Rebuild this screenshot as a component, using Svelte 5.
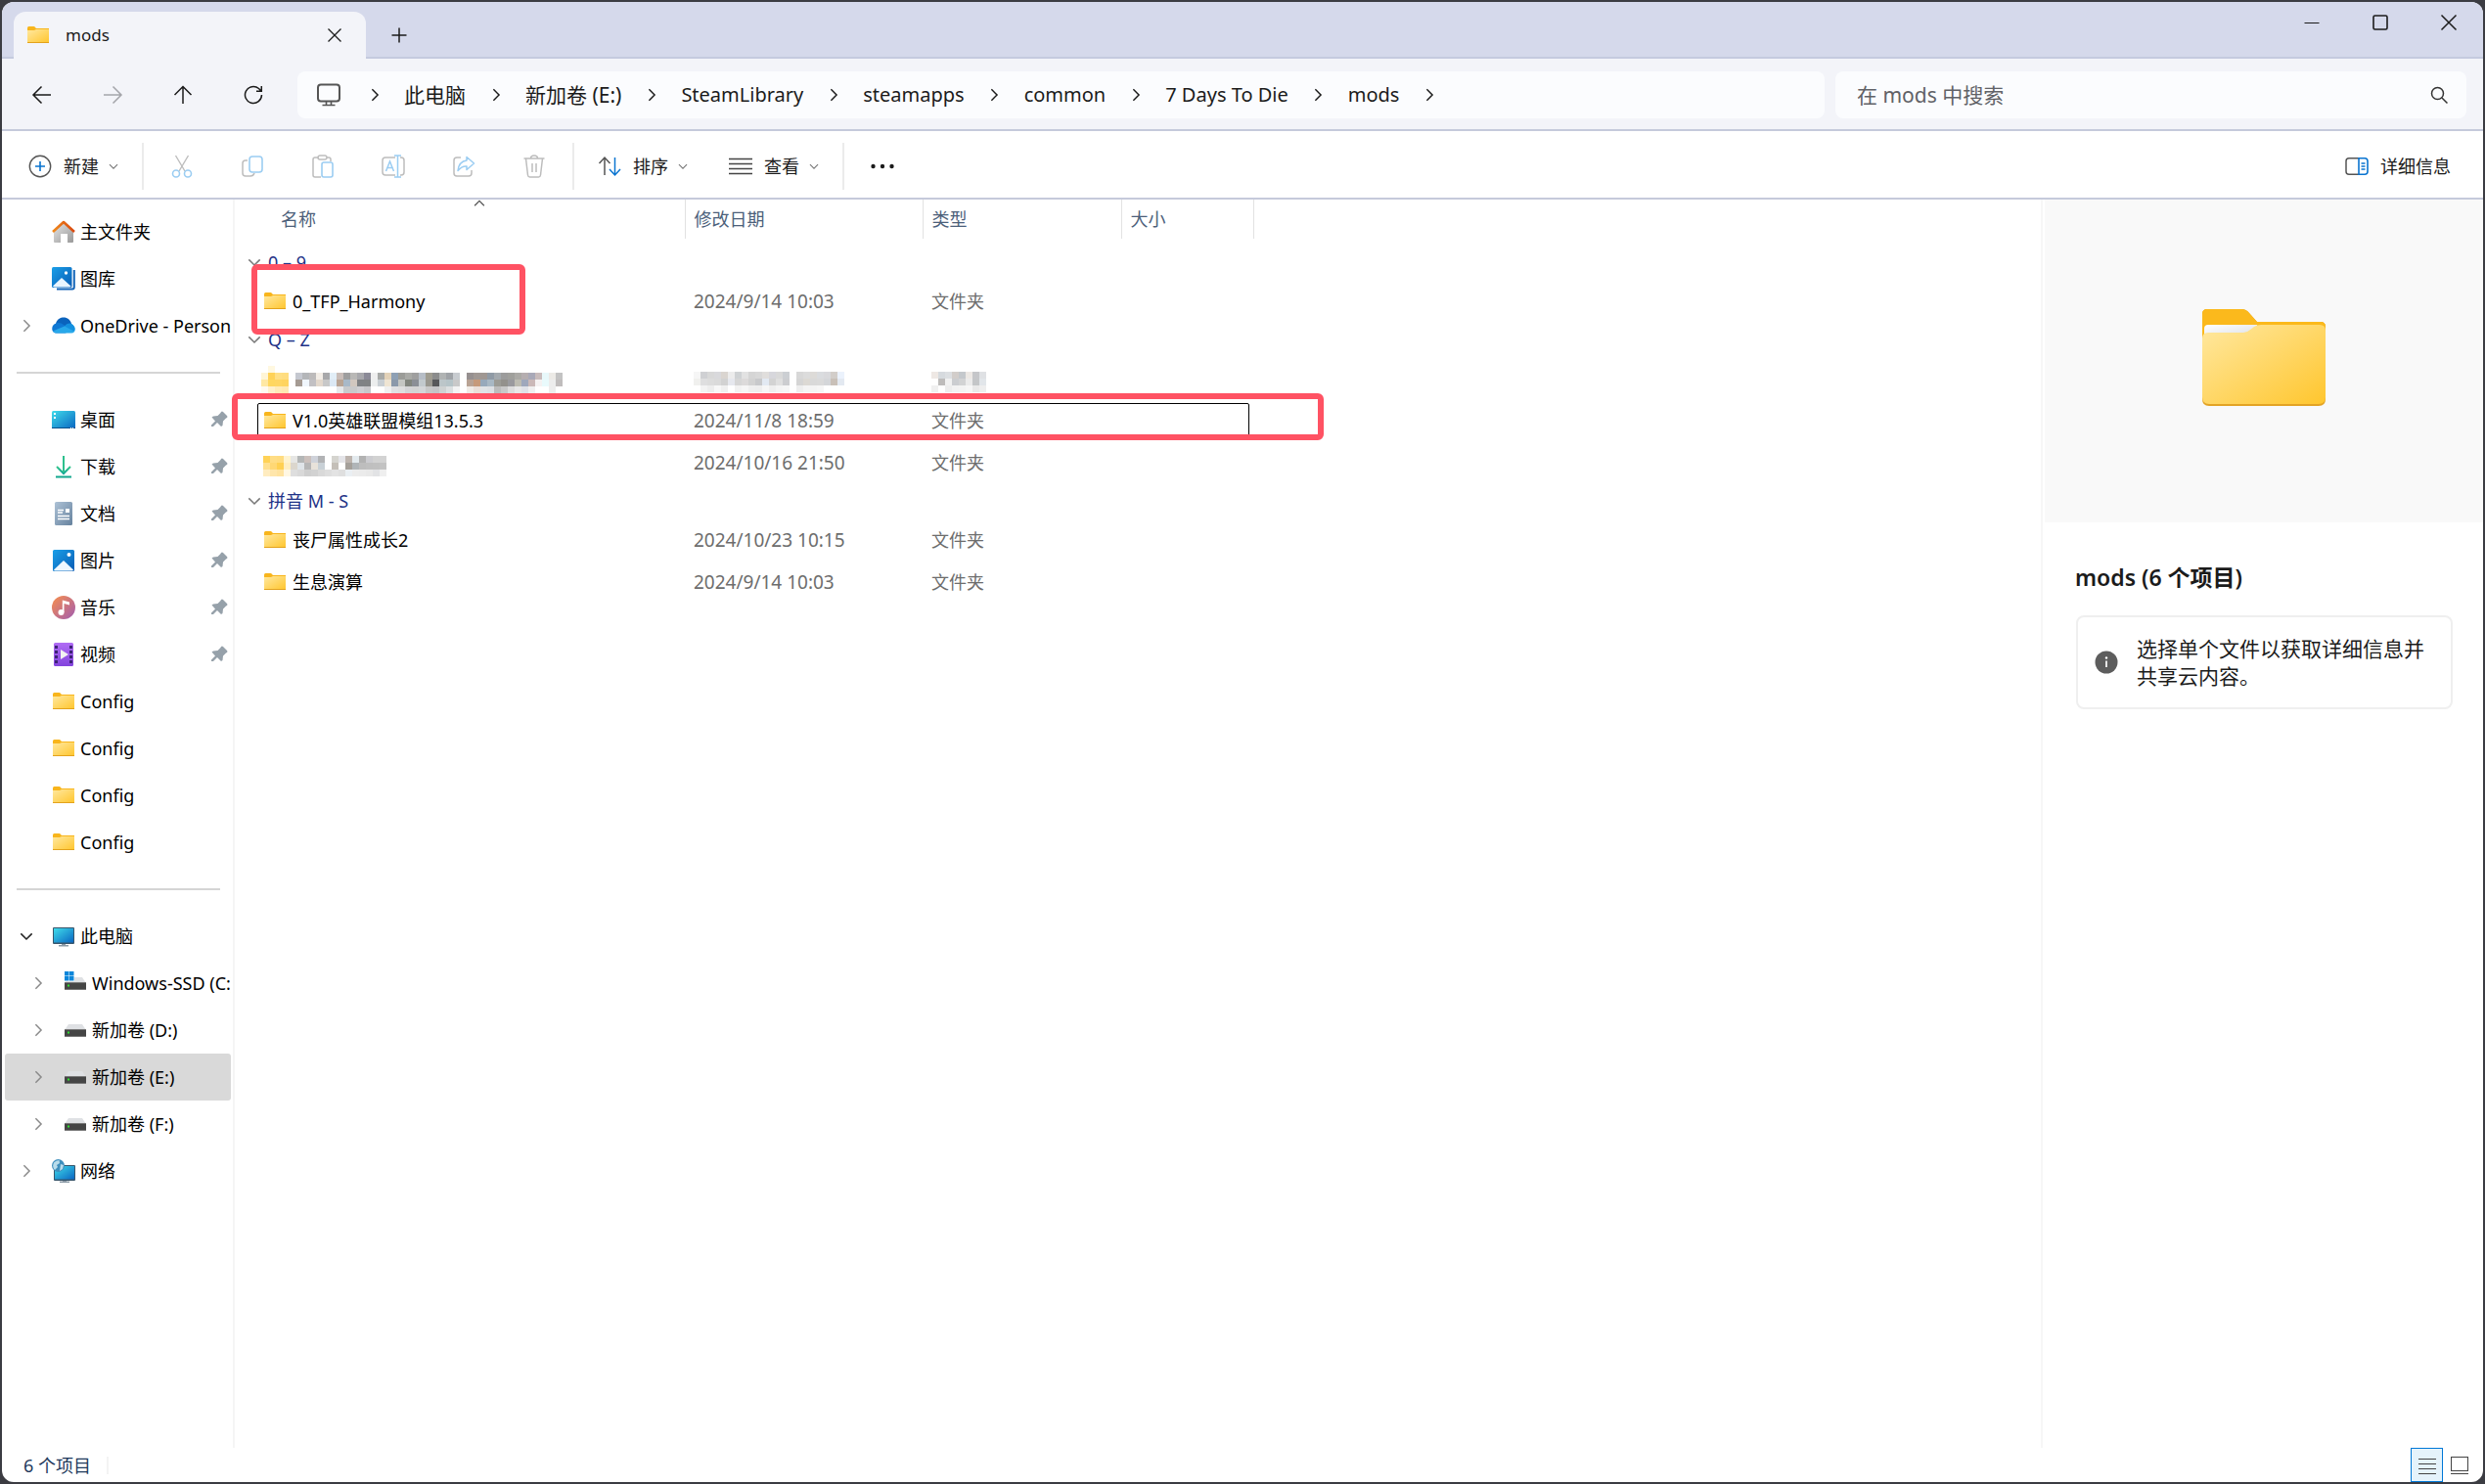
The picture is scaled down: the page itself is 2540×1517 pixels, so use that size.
<script lang="ts">
  const crumbs = ['此电脑', '新加卷 (E:)', 'SteamLibrary', 'steamapps', 'common', '7 Days To Die', 'mods'];

  const tools = [
    { icon: 'cut', label: '剪切' },
    { icon: 'copy', label: '复制' },
    { icon: 'paste', label: '粘贴' },
    { icon: 'rename', label: '重命名' },
    { icon: 'share', label: '共享' },
    { icon: 'delete', label: '删除' },
  ];

  type NavItem = { icon: string; label: string; arrow?: string; pin?: boolean; nested?: boolean; active?: boolean };
  const sections: NavItem[][] = [
    [
      { icon: 'home', label: '主文件夹' },
      { icon: 'gallery', label: '图库' },
      { icon: 'cloud', label: 'OneDrive - Personal', arrow: 'right' },
    ],
    [
      { icon: 'desktop', label: '桌面', pin: true },
      { icon: 'download', label: '下载', pin: true },
      { icon: 'document', label: '文档', pin: true },
      { icon: 'picture', label: '图片', pin: true },
      { icon: 'music', label: '音乐', pin: true },
      { icon: 'video', label: '视频', pin: true },
      { icon: 'folder', label: 'Config' },
      { icon: 'folder', label: 'Config' },
      { icon: 'folder', label: 'Config' },
      { icon: 'folder', label: 'Config' },
    ],
    [
      { icon: 'pc', label: '此电脑', arrow: 'down' },
      { icon: 'windrive', label: 'Windows-SSD (C:)', arrow: 'right', nested: true },
      { icon: 'drive', label: '新加卷 (D:)', arrow: 'right', nested: true },
      { icon: 'drive', label: '新加卷 (E:)', arrow: 'right', nested: true, active: true },
      { icon: 'drive', label: '新加卷 (F:)', arrow: 'right', nested: true },
      { icon: 'network', label: '网络', arrow: 'right' },
    ],
  ];

  const nameTiles = [
    'fff fff8e0 fff fff fff',
    'fff5d6 ffd257 ffdf85 ffdd80 fff c5c8d0 b4b6b9 bdbbbb f3ede6 a8a8aa e2eef7 c9bdb8 9e9e9e b9b8b6 a8a8ac 8b8a97 efefef a8aaa8 e3d2b8 8ea0b4 9b9c98 a9aaa6 9f9f9f b6bdc6 9f9c90 8b8c8c b0b3b3 9fa3a7 c8ccd0 fff 969090 a09894 9f9792 8f9aa5 a3a9ae 9c9c9c a0a09c abaaa6 b5aeb0 a9a9b8 c9bcbc e8f8fa eceae6 c3c3c3',
    'ffe8a3 ffd75f ffd663 ffd45f fff a59b93 f0f6fc c2c0c3 e3d8cc c8c8c8 dbe8f4 b9a595 a8b9c8 d1c7bf 808285 808284 eceeee c9cfd4 efe5d3 8b99aa c4c6c2 82867e 8b8f96 c2c9cd 9a9890 57585a bcc6c9 b6c4c8 c9c9c9 fff b9a394 c69a7a 97a9bb a8b8c4 9c9c96 93918c 9a9a9e bdbcb2 9fa8bc cbb9b8 f5f2f2 e9fafc ededed c0bdbd',
    'fffaf0 fff0cb ffebb8 ffe9b2 fff fff fff fff fff fff fff e6e8ea c8cacc c9c9ca cfced2 c7c7ca fff fff f0f0f0 e0e0e2 dedede d4d4d6 d3d3d3 d4d6d8 c8c8c8 c4c4c6 cfd2d2 dcdfe0 f3f3f3 fff f0ebe6 eadfd8 e0e3e6 dde0e4 bcbcbc c8c8c8 ddd e8e8e8 e0e2e8 f0f0f0 fff fff ededed fff',
  ];
  const dateTiles = [
    'f6f6f6 cfd0d3 d8d8d8 d9d9dc dad5d0 ececec cfd2d4 e2e2e2 d5d5d5 d8d8d8 e0dedc d7d7dc d9d9d9 cccfd3 fff d8d8d8 dcdcdc dddbd8 dadcdf d9d9dc d2cdc9 ebf2fc',
    'f0f0ee dededf dcdcdc dadada d2d2d2 e6e8ee d6d6d6 dcdada d2d2d2 c8c9cb e2e9f2 d3d3d3 dfdfdf cccdd0 fff d5d5d5 dcd9d4 d9d9d9 dadada d4d6d9 c9c0b8 e3e9f1',
    'fff f3f3f3 ededed f7f7f7 f0f0f0 fff f2f2f2 f6f6f6 efefef eee f6f6f6 efefef f4f4f4 f6f6f6 fff eee f4f4f4 f4f4f4 f6f6f6 fff fff fff',
  ];
  const typeTiles = [
    'eee8e4 d6dade dcdfe2 d2cdca c4c8cc ece8e4 c5c6c9 dfe1e4',
    'fff bebcbb f1f1f1 cbcdd0 d2d3d4 ebebeb c4c6c8 e2e6ea',
    'f0f0f0 fff ededed f2f2f2 f3f3f3 f6f6f6 e9e9e9 eee',
  ];
  const shortTiles = [
    'ffd257 ffdd85 ffdc80 fff3cf e6e6e4 b4b6b6 cbc0bc cfd2da b2b3b5 fff d5d4cf e4e4e8 bdb4ae e3eaee b2b2b2 ccccd0 d2d2d2 d3d3d3',
    'ffe090 ffd875 ffd052 ffeec0 dbd6cd dfe4e8 b6b6b6 e8e2da c8d0d6 fff c4bfb8 fff a5a09a b0b5b8 bdbdbd bfbfbf c0c0c0 c3c3c3',
    'ffecc0 ffe6ab ffe3a0 fff7e3 dedede d9d9d9 cfcfcf d2d2d2 d9d9d9 dedede e3e3e3 dfdfdf eaeff3 ececec ebebeb e9e9e9 e2e3e5 efefef',
  ];

  type FileRow = { name?: string; date?: string; hidden?: string; typed?: boolean };
  const groups: { title: string; rows: FileRow[] }[] = [
    { title: '0 – 9', rows: [{ name: '0_TFP_Harmony', date: '2024/9/14 10:03', typed: true }] },
    {
      title: 'Q – Z',
      rows: [
        { hidden: 'long' },
        { name: 'V1.0英雄联盟模组13.5.3', date: '2024/11/8 18:59', typed: true },
        { hidden: 'short', date: '2024/10/16 21:50', typed: true },
      ],
    },
    {
      title: '拼音 M - S',
      rows: [
        { name: '丧尸属性成长2', date: '2024/10/23 10:15', typed: true },
        { name: '生息演算', date: '2024/9/14 10:03', typed: true },
      ],
    },
  ];
</script>

{#snippet mosaic(rows: string[])}
  {@const cols = Math.max(...rows.map((r) => r.split(' ').length))}
  <svg class="mosaic" width={cols * 7} height={rows.length * 7} shape-rendering="crispEdges" aria-hidden="true">
    {#each rows as row, y}
      {#each row.split(' ') as c, x}
        <rect x={x * 7} y={y * 7} width="7" height="7" fill={'#' + c} />
      {/each}
    {/each}
  </svg>
{/snippet}

{#snippet chevron(dir: string, size: number)}
  <svg width={size} height={size} viewBox="0 0 16 16" fill="none" stroke="currentColor" stroke-width="1.7" aria-hidden="true">
    {#if dir === 'right'}<path d="M5 1.5 11.5 8 5 14.5" />
    {:else if dir === 'up'}<path d="M1.5 11 8 4.5 14.5 11" />
    {:else}<path d="M1.5 5 8 11.5 14.5 5" />{/if}
  </svg>
{/snippet}

{#snippet icon(name: string)}
  <svg width="24" height="24" viewBox="0 0 24 24" fill="none" aria-hidden="true">
    {#if name === 'folder'}
      <path d="M1 5V4.5Q1 3 2.500 3H7.500Q8.500 3 9 4L10 5H23V8H1Z" fill="#f8b51c" />
      <path d="M1 7H8L10 6H23V19.500H1Z" fill="url(#gFolder)" />
      <path d="M1 19.500H23" stroke="#e3a21c" />
    {:else if name === 'home'}
      <path d="M2 11 12 3l10 8v11q0 1-1 1h-5v-9H9v9H3q-1 0-1-1Z" fill="url(#gGrey)" />
      <path d="M1 12 12 2l11 10" stroke="url(#gOrange)" stroke-width="2.600" stroke-linejoin="round" />
    {:else if name === 'gallery'}
      <path d="M5 22.500H21Q22.800 22.500 22.800 20.500V3" stroke="#1465b8" stroke-width="2" />
      <rect x="0" y="0" width="20.500" height="21" rx="1.500" fill="url(#gBlue)" />
      <path d="M1 19.500 10 11l9.500 8.500q-.5 1-1.500 1H3q-1.500 0-2-1Z" fill="#eaf5ff" />
      <circle cx="14.500" cy="6" r="1.700" fill="#fff" />
    {:else if name === 'picture'}
      <rect x="1" y="1" width="22" height="22" rx="1.500" fill="url(#gBlue)" />
      <path d="M2 21.500 12 12l10 9.500q-.5 1-1 1H3q-.7 0-1-1Z" fill="#eef7ff" />
      <circle cx="17.500" cy="6" r="2" fill="#fff" />
    {:else if name === 'cloud'}
      <path d="M4 10C5 5 9 3.500 12 3.500c4 0 7 2.500 8 6.500l-8 4Z" fill="#0a63bd" />
      <path d="M5 19.500C-1.500 19.500-1 10.500 4.500 9.500c3-1 5.500 0 7.500 1.500l8 5-6 3.500Z" fill="#0f78d4" />
      <path d="M14 12c2-3 7.500-2.500 8.500.5 2.500 2 1.500 7-2.500 7H5c-2 0-3-.8-4-2Z" fill="#28a8ea" />
      <path d="M13 12.500c3-4 7-3.500 9-1 1.500 1.500 1.500 4.500.5 6Z" fill="#1490df" />
    {:else if name === 'desktop'}
      <rect x="0" y="3" width="24" height="18" rx="1.500" fill="url(#gCyan)" />
      <path d="M0 20.500h24" stroke="#084f8a" />
      <path d="M2 5h2v2H2zM2 9h2v2H2zM19 20h1v1h-1zM21 20h1v1h-1z" fill="#fff" />
    {:else if name === 'download'}
      <path d="M5 12l7 7 7-7" stroke="url(#gGreen)" stroke-width="2" />
      <path d="M12 1v17" stroke="#2dc08d" stroke-width="2" />
      <path d="M4 22.500H20" stroke="#12a88e" stroke-width="2" />
    {:else if name === 'document'}
      <rect x="3" y="0" width="18" height="24" rx="1.500" fill="url(#gDoc)" />
      <path d="M6 8.500h6M6 11h5M6 14.500h12M6 17.500h12" stroke="#fff" stroke-width="1.300" />
      <path d="M14 7h4v4h-4z" fill="#fff" />
    {:else if name === 'music'}
      <circle cx="12" cy="12" r="12" fill="url(#gMusic)" />
      <circle cx="9.500" cy="17" r="3" fill="#fff" />
      <path d="M10.800 17V4.500L18 6.500V9.500L12.500 8V17Z" fill="#fff" />
    {:else if name === 'video'}
      <rect x="2" y="0" width="20" height="24" rx="1.500" fill="url(#gVideo)" />
      <path d="M3 3h3v3H3zM3 8h3v3H3zM3 13h3v3H3zM3 18h3v3H3zM18 3h3v3h-3zM18 8h3v3h-3zM18 13h3v3h-3zM18 18h3v3h-3z" fill="#3e2377" />
      <path d="M9 7v10l8-5Z" fill="#f2f2f2" />
    {:else if name === 'pc'}
      <path d="M10 19h4v2h3v1.500H7V21h3Z" fill="#8b9aa6" />
      <rect x="1" y="3" width="22" height="17" rx="1" fill="#38566c" />
      <rect x="2" y="4" width="20" height="14.500" fill="url(#gCyan)" />
    {:else if name === 'network'}
      <path d="M11 21h4v1.500h3V24H8v-1.500h3Z" fill="#8b9aa6" />
      <rect x="2" y="6" width="22" height="16" rx="1" fill="#38566c" />
      <rect x="3" y="7" width="20" height="13.500" fill="url(#gCyan)" />
      <circle cx="6.500" cy="6.500" r="6.500" fill="#3f8fbd" />
      <path d="M2 3.500Q4 1 7.500 1L8 4 5 6 6 8 3 11Q0 8 2 3.500ZM9 5l3 1-1 4-3 2Z" fill="#b9dceb" />
    {:else if name === 'drive' || name === 'windrive'}
      <path d="M5 6h14l4 6H1Z" fill="#dfe1e4" />
      <rect x="1" y="11" width="22" height="8" fill="#454545" />
      <path d="M1 11.500h22M1 18.500h22" stroke="#777" />
      <path d="M4 13.500h2v2H4z" fill="#2fe22f" />
      {#if name === 'windrive'}
        <path d="M0 0h11v10H0z" fill="#fff" />
        <path d="M1 0h4.500v4.500H1zM6 0h4.500v4.500H6zM1 5h4.500v4.500H1zM6 5h4.500v4.500H6z" fill="#0b86da" />
      {/if}
    {:else if name === 'pin'}
      <path d="M14 4q1-1 2 0l4 4q1 1 0 2l-1 .5-3 3-.5 4.500-1.500 1-4-4-4 4H4v-1.500l4-4-3.500-4L6 8.500l4.500-.5 3-3Z" fill="#96a1aa" />
    {:else if name === 'new'}
      <circle cx="12" cy="12" r="10.700" stroke="#555" stroke-width="1.400" />
      <path d="M12 7v10M7 12h10" stroke="#0a74d0" stroke-width="1.600" />
    {:else if name === 'cut'}
      <path d="M5.500 1 15 17M18.500 1 9 17" stroke="#bdbdbd" stroke-width="1.400" />
      <circle cx="6" cy="19.500" r="3.500" stroke="#9bcdf2" stroke-width="1.600" />
      <circle cx="18" cy="19.500" r="3.500" stroke="#9bcdf2" stroke-width="1.600" />
    {:else if name === 'copy'}
      <path d="M7 6H5Q2 6 2 9v10q0 3 3 3h5q3 0 4-3" stroke="#bdbdbd" stroke-width="1.500" />
      <rect x="9" y="2" width="13" height="16" rx="3" stroke="#9bcdf2" stroke-width="1.600" />
    {:else if name === 'paste'}
      <path d="M8 3H4Q2 3 2 5v16q0 2 2 2h6M16 3h2q2 0 2 2v2" stroke="#bdbdbd" stroke-width="1.500" />
      <rect x="7" y="1" width="9" height="4" rx="2" stroke="#bdbdbd" stroke-width="1.400" />
      <rect x="11" y="8" width="11" height="15" rx="2" stroke="#9bcdf2" stroke-width="1.600" />
    {:else if name === 'rename'}
      <path d="M14 3H4Q1 3 1 6v12q0 3 3 3h10M19 3h1q3 0 3 3v12q0 3-3 3h-1" stroke="#bdbdbd" stroke-width="1.500" />
      <path d="M4.500 17 8.500 7l4 10M6 13.500h5M13 1h7M13 23h7M16.500 1v22" stroke="#9bcdf2" stroke-width="1.500" />
    {:else if name === 'share'}
      <path d="M9 3H5Q2 3 2 6v13q0 3 3 3h12q3 0 3-3v-3" stroke="#bdbdbd" stroke-width="1.500" />
      <path d="M15 2.500 22.500 9 15 15.500V12q-5-.5-9 4.500Q7 7 15 6Z" stroke="#9bcdf2" stroke-width="1.500" stroke-linejoin="round" />
    {:else if name === 'delete'}
      <path d="M1.500 4h21M8.500 4q0-3 3.500-3t3.500 3M3.500 4l2 17q.3 2 2 2h9q1.700 0 2-2l2-17M10 9v9M14 9v9" stroke="#bdbdbd" stroke-width="1.500" />
    {:else if name === 'sort'}
      <path d="M7 21V3M1.500 9 7 3l5.500 6" stroke="#555" stroke-width="1.500" />
      <path d="M17.500 3v18M12 15l5.500 6 5.500-6" stroke="#0a74d0" stroke-width="1.500" />
    {:else if name === 'view'}
      <path d="M0 4.500h24M0 9.500h24M0 14.500h24M0 19.500h24" stroke="#444" stroke-width="1.500" />
    {:else if name === 'more'}
      <circle cx="2.500" cy="12" r="2.200" fill="#1b1b1b" /><circle cx="12" cy="12" r="2.200" fill="#1b1b1b" /><circle cx="21.500" cy="12" r="2.200" fill="#1b1b1b" />
    {:else if name === 'details'}
      <path d="M14 3.700H4Q1 3.700 1 6.700v10.600q0 3 3 3H14" stroke="#555" stroke-width="1.500" />
      <path d="M14 3.700h6q3 0 3 3v10.600q0 3-3 3h-6Z" stroke="#0a74d0" stroke-width="1.600" />
      <path d="M16.500 9h4M16.500 12h4M16.500 15h4" stroke="#0a74d0" stroke-width="1.400" />
    {:else if name === 'back'}
      <path d="M21 12H3.500M11.500 3.500 3 12l8.500 8.500" stroke="currentColor" stroke-width="1.500" />
    {:else if name === 'forward'}
      <path d="M3 12h17.500M12.500 3.500 21 12l-8.500 8.500" stroke="currentColor" stroke-width="1.500" />
    {:else if name === 'up'}
      <path d="M12 21V3.500M3.500 12 12 3.500 20.500 12" stroke="currentColor" stroke-width="1.500" />
    {:else if name === 'refresh'}
      <path d="M20.500 12a8.500 8.500 0 1 1-3-6.500L20 8M20.300 3v5.300H15" stroke="currentColor" stroke-width="1.500" />
    {:else if name === 'monitor'}
      <rect x="1" y="1.500" width="22" height="17" rx="3" stroke="#555" stroke-width="2" />
      <path d="M9.500 19v3M14.500 19v3M5.500 22.500h13" stroke="#555" stroke-width="1.600" />
    {:else if name === 'search'}
      <circle cx="10.500" cy="10.500" r="6" stroke="#333" stroke-width="1.500" />
      <path d="m15 15 5.500 5.500" stroke="#333" stroke-width="1.500" />
    {:else if name === 'close'}
      <path d="m5.500 5.500 13 13m0-13-13 13" stroke="currentColor" stroke-width="1.300" />
    {:else if name === 'plus'}
      <path d="M12 4.500v15M4.500 12h15" stroke="currentColor" stroke-width="1.500" />
    {:else if name === 'min'}
      <path d="M4.500 12.500h15" stroke="currentColor" />
    {:else if name === 'max'}
      <rect x="5" y="5" width="14" height="14" rx="1.500" stroke="currentColor" stroke-width="1.600" />
    {:else if name === 'winclose'}
      <path d="m4.500 4.500 15 15m0-15-15 15" stroke="currentColor" stroke-width="1.500" />
    {:else if name === 'info'}
      <circle cx="12" cy="12" r="11.500" fill="#5d5d5d" />
      <path d="M12 10.500V17" stroke="#fff" stroke-width="1.700" /><circle cx="12" cy="7.500" r="1.200" fill="#fff" />
    {:else if name === 'lines'}
      <path d="M3 5.500h18M3 10.500h18M3 15.500h18M3 20.500h18" stroke="#444" />
    {:else if name === 'thumb'}
      <rect x="3.500" y="3.500" width="17" height="14" stroke="#444" />
      <path d="M3 20.500h18" stroke="#444" />
    {/if}
  </svg>
{/snippet}

<svg class="defs" width="0" height="0" aria-hidden="true">
  <defs>
    <linearGradient id="gFolder" x1="0" y1="0" x2="1" y2="1"><stop stop-color="#ffe8a0" /><stop offset="1" stop-color="#ffc62e" /></linearGradient>
    <linearGradient id="gGrey" x1="0" y1="0" x2="1" y2="1"><stop stop-color="#e4e4e4" /><stop offset="1" stop-color="#999" /></linearGradient>
    <linearGradient id="gOrange" x1="0" y1="0" x2="1" y2="0"><stop stop-color="#f08a1c" /><stop offset="1" stop-color="#d9480f" /></linearGradient>
    <linearGradient id="gBlue" x1="0" y1="0" x2="1" y2="1"><stop stop-color="#1a9fe8" /><stop offset="1" stop-color="#0a5cb4" /></linearGradient>
    <linearGradient id="gCyan" x1="0" y1="0" x2="1" y2="1"><stop stop-color="#3fdcea" /><stop offset="1" stop-color="#0a66c2" /></linearGradient>
    <linearGradient id="gGreen" x1="0" y1="0" x2="0" y2="1"><stop stop-color="#35c68c" /><stop offset="1" stop-color="#10a594" /></linearGradient>
    <linearGradient id="gDoc" x1="0" y1="0" x2="1" y2="1"><stop stop-color="#aec2d6" /><stop offset="1" stop-color="#66829e" /></linearGradient>
    <linearGradient id="gMusic" x1="0" y1="0" x2="1" y2="1"><stop offset="0.1" stop-color="#f08a55" /><stop offset="0.900" stop-color="#a961a8" /></linearGradient>
    <linearGradient id="gVideo" x1="0" y1="0" x2="0" y2="1"><stop stop-color="#b06cf4" /><stop offset="1" stop-color="#8344dd" /></linearGradient>
    <linearGradient id="gPaper" x1="0" y1="0" x2="1" y2="1"><stop stop-color="#fff" /><stop offset="1" stop-color="#dcdfe6" /></linearGradient>
  </defs>
</svg>

<div class="window">
  <header class="titlebar">
    <div class="tab">
      {@render icon('folder')}
      <span class="tab-title">mods</span>
      <button class="tab-close" aria-label="关闭标签页">{@render icon('close')}</button>
    </div>
    <button class="new-tab" aria-label="新建标签页">{@render icon('plus')}</button>
    <div class="caption">
      <button aria-label="最小化">{@render icon('min')}</button>
      <button aria-label="最大化">{@render icon('max')}</button>
      <button aria-label="关闭">{@render icon('winclose')}</button>
    </div>
  </header>

  <div class="navbar">
    <div class="nav-buttons">
      <button aria-label="后退">{@render icon('back')}</button>
      <button aria-label="前进" disabled>{@render icon('forward')}</button>
      <button aria-label="上移">{@render icon('up')}</button>
      <button aria-label="刷新">{@render icon('refresh')}</button>
    </div>
    <nav class="address" aria-label="地址">
      <span class="place">{@render icon('monitor')}</span>
      <span class="sep">{@render chevron('right', 14)}</span>
      {#each crumbs as crumb, i}
        <a href="#crumb-{i}" class:cjk={i < 2}>{crumb}</a>
        <span class="sep">{@render chevron('right', 14)}</span>
      {/each}
    </nav>
    <div class="search">
      <input type="search" aria-label="搜索" placeholder="在 mods 中搜索" />
      {@render icon('search')}
    </div>
  </div>

  <div class="toolbar">
    <button class="cmd">{@render icon('new')}<span>新建</span>{@render chevron('down', 10)}</button>
    <span class="rule"></span>
    {#each tools as t}
      <button class="tool" aria-label={t.label} disabled>{@render icon(t.icon)}</button>
    {/each}
    <span class="rule"></span>
    <button class="cmd sort">{@render icon('sort')}<span>排序</span>{@render chevron('down', 10)}</button>
    <button class="cmd view">{@render icon('view')}<span>查看</span>{@render chevron('down', 10)}</button>
    <span class="rule"></span>
    <button class="tool" aria-label="更多">{@render icon('more')}</button>
    <button class="cmd details-toggle">{@render icon('details')}<span>详细信息</span></button>
  </div>

  <div class="body">
    <nav class="sidebar" aria-label="导航窗格">
      {#each sections as section, s}
        {#if s > 0}<hr />{/if}
        {#each section as item}
          <a class="item" class:nested={item.nested} class:active={item.active} href="#nav">
            <span class="arrow" class:open={item.arrow === 'down'}>
              {#if item.arrow}{@render chevron(item.arrow, 14)}{/if}
            </span>
            {@render icon(item.icon)}
            <span class="label">{item.label}</span>
            {#if item.pin}{@render icon('pin')}{/if}
          </a>
        {/each}
      {/each}
    </nav>

    <main class="files">
      <table>
        <colgroup><col class="c-name" /><col class="c-date" /><col class="c-type" /><col class="c-size" /><col /></colgroup>
        <thead>
          <tr>
            <th scope="col" class="name-head">名称<span class="sorted">{@render chevron('up', 12)}</span></th>
            <th scope="col">修改日期</th><th scope="col">类型</th><th scope="col">大小</th><td></td>
          </tr>
        </thead>
        {#each groups as g}
          <tbody>
            <tr class="group">
              <th scope="rowgroup" colspan="5"><div class="group-head">{@render chevron('down', 14)}<span>{g.title}</span></div></th>
            </tr>
            {#each g.rows as row}
              <tr class="file">
                <td>
                  <div class="name" class:masked={row.hidden === 'long'}>
                    {#if row.hidden === 'long'}{@render mosaic(nameTiles)}
                    {:else if row.hidden}{@render mosaic(shortTiles)}
                    {:else}{@render icon('folder')}<span>{row.name}</span>{/if}
                  </div>
                </td>
                <td class="date">{#if row.date}{row.date}{:else}{@render mosaic(dateTiles)}{/if}</td>
                <td class="type">{#if row.typed}文件夹{:else}{@render mosaic(typeTiles)}{/if}</td>
                <td></td><td></td>
              </tr>
            {/each}
          </tbody>
        {/each}
      </table>
      <div class="focus"></div>
      <div class="mark mark-first"></div>
      <div class="mark mark-second"></div>
    </main>

    <aside class="details" aria-label="详细信息">
      <div class="preview">
        <svg width="126" height="99" viewBox="0 0 126 99" aria-hidden="true">
          <path d="M0 5Q0 0 5 0H40Q45 0 48 4L56 13H121Q126 13 126 18V92Q126 99 119 99H7Q0 99 0 92Z" fill="#e3a325" />
          <path d="M0 5Q0 0 5 0H40Q45 0 48 4L56 13H121Q126 13 126 18V50H0Z" fill="#fbb91c" />
          <path d="M2 28V20Q2 16 6 16H56V28Z" fill="url(#gPaper)" />
          <path d="M0 30Q0 24 6 24H42Q46 24 49 21L53 18Q56 16 60 16H120Q126 16 126 22V90Q126 97 119 97H7Q0 97 0 90Z" fill="url(#gFolder)" />
        </svg>
      </div>
      <h2>mods (6 个项目)</h2>
      <div class="card">{@render icon('info')}<p>选择单个文件以获取详细信息并共享云内容。</p></div>
    </aside>
  </div>

  <footer class="status">
    <span class="count">6 个项目</span>
    <span class="status-rule"></span>
    <div class="modes">
      <button class="on" aria-label="详细信息视图">{@render icon('lines')}</button>
      <button aria-label="缩略图视图">{@render icon('thumb')}</button>
    </div>
  </footer>
</div>

<style>
  :global(body) { margin: 0; background: #3b3c42; }
  :global(#app) { font-family: 'Noto Sans', 'Noto Sans CJK SC', sans-serif; font-size: 18px; line-height: 24px; color: #000; }
  .defs { position: absolute; }
  .window { box-sizing: border-box; min-height: 100vh; display: flex; flex-direction: column; border: 2px solid #3b3c42; border-radius: 14px; background: #fff; overflow: hidden; }
  svg { display: block; flex: none; }
  button { font: inherit; color: #1b1b1b; background: none; border: 0; padding: 0; display: flex; align-items: center; justify-content: center; }
  a { color: inherit; text-decoration: none; }

  .titlebar { display: flex; height: 56px; background: #d5d9eb; border-bottom: 2px solid #c5cadf; }
  .tab { box-sizing: border-box; display: flex; align-items: center; width: 360px; height: 48px; margin: 10px 0 0 12px; padding: 0 20px 0 13px; border-radius: 12px 12px 0 0; background: #f3f4f9; color: #1b1b1b; font-size: 17px; }
  .tab-title { flex: 1; padding-left: 16px; }
  .new-tab { width: 48px; height: 48px; margin: 10px 0 0 10px; }
  .caption { display: flex; margin-left: auto; }
  .caption button { width: 70px; height: 42px; }

  .navbar { display: flex; align-items: center; height: 70px; padding: 2px 17px 0 0; background: #f3f4f9; border-bottom: 2px solid #c5cadb; }
  .nav-buttons { display: flex; padding: 0 9px 0 5px; }
  .nav-buttons button { width: 72px; height: 48px; }
  .nav-buttons button:disabled { color: #a4a5aa; }
  .address, .search { box-sizing: border-box; display: flex; align-items: center; height: 48px; border-radius: 8px; background: #fbfcfe; }
  .address { flex: 1; padding-left: 17px; margin-right: 11px; color: #1b1b1b; font-size: 20px; white-space: nowrap; }
  .address .cjk { font-size: 21px; }
  .place { padding: 0 4px 0 3px; }
  .sep { display: flex; justify-content: center; width: 61px; }
  .search { flex: 0 0 645px; padding-right: 16px; }
  .search input { flex: 1; min-width: 0; padding: 0 0 0 22px; border: 0; outline: 0; background: none; font: inherit; font-size: 21px; }
  .search input::placeholder { color: #616267; }

  .toolbar { display: flex; align-items: center; height: 64px; padding: 4px 33px 0 27px; border-bottom: 2px solid #c5cadb; }
  .cmd { gap: 12px; height: 48px; }
  .cmd :global(svg:last-child) { color: #777; margin-left: -2px; }
  .toolbar .rule { width: 2px; height: 48px; background: #ebebeb; margin: 0 3px 0 24px; }
  .tool { width: 72px; height: 48px; }
  .toolbar .tool + .rule { margin: 0 24px 0 3px; }
  .view { margin-left: 42px; }
  .toolbar .details-toggle { margin-left: auto; }

  .body { flex: 1; display: flex; }
  .sidebar { box-sizing: border-box; width: 238px; flex: none; padding: 9px 2px 0 3px; border-right: 2px solid #f5f5f5; }
  .item { display: flex; align-items: center; height: 48px; overflow: hidden; white-space: nowrap; border-radius: 3px; }
  .item.nested { padding-left: 12px; }
  .item.active { background: #d9d9d9; }
  .arrow { display: flex; justify-content: center; width: 44px; flex: none; color: #8a8a8a; padding-right: 4px; }
  .arrow.open { color: #222; }
  .label { padding-left: 5px; flex: 1; }
  hr { height: 2px; margin: 23px 11px 23px 12px; border: 0; background: #d5d5d5; }

  .files { position: relative; flex: 1; min-width: 0; }
  table { width: 100%; table-layout: fixed; border-collapse: collapse; }
  .c-name { width: 460px; }
  .c-date { width: 243px; }
  .c-type { width: 203px; }
  .c-size { width: 135px; }
  th, td { padding: 0; font-weight: 400; text-align: left; }
  thead th { box-sizing: border-box; height: 40px; padding-left: 9px; border-right: 1px solid #e2e2e2; color: #4c607a; }
  thead .name-head { position: relative; padding-left: 47px; }
  .sorted { position: absolute; top: -2px; left: 244px; color: #555; }
  .group th { height: 36px; color: #1e3287; }
  tbody:nth-of-type(1) .group th { padding-top: 6px; }
  .group-head { display: flex; align-items: center; gap: 7px; padding-left: 13px; }
  .group-head :global(svg) { color: #777; }
  .file td { height: 43px; }
  .name { display: flex; align-items: center; gap: 6px; padding-left: 29px; }
  .name.masked { padding-left: 27px; }
  .mosaic { margin-top: 8px; }
  .masked .mosaic { margin-top: 2px; }
  .date, .type { color: #6d6d6d; }
  .file .date, .file .type { padding-left: 9px; }
  .date { font-size: 19px; }
  .focus { position: absolute; box-sizing: border-box; top: 208px; left: 23px; width: 1014px; height: 36px; border: 1px solid #000; border-radius: 2px; }
  .mark { position: absolute; box-sizing: border-box; border: 6px solid #ff5263; border-radius: 6px; }
  .mark-first { top: 66px; left: 17px; width: 280px; height: 72px; }
  .mark-second { top: 198px; left: -3px; width: 1116px; height: 48px; }

  .details { box-sizing: border-box; width: 452px; flex: none; padding-left: 2px; border-left: 2px solid #f7f7f7; color: #1b1b1b; }
  .preview { display: flex; align-items: center; justify-content: center; height: 322px; padding-bottom: 8px; background: #f9f9f9; }
  h2 { margin: 40px 31px 23px; font-size: 23px; font-weight: 600; line-height: 32px; }
  .card { display: flex; align-items: center; gap: 19px; margin: 0 31px 0 32px; padding: 18px 12px 18px 17px; border: 2px solid #efefef; border-radius: 8px; }
  .card p { margin: 0; font-size: 21px; line-height: 28px; }

  .status { display: flex; align-items: center; height: 35px; padding: 0 8px 0 22px; color: #1e395b; }
  .status-rule { width: 2px; height: 18px; margin-left: 16px; background: #f3f3f3; }
  .modes { display: flex; margin-left: auto; }
  .modes button { box-sizing: border-box; width: 33px; height: 35px; }
  .modes .on { border: 1px solid #0078d7; background: #e5f3fb; }
</style>
